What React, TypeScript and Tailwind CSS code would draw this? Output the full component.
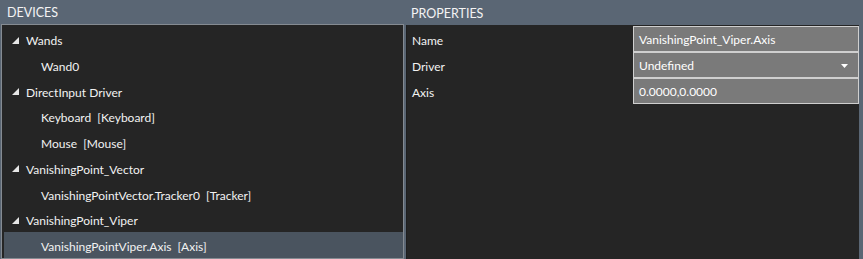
import React from "react";

type Row = { label: string; level: 0 | 1; selected?: boolean };

const rows: Row[] = [
  { label: "Wands", level: 0 },
  { label: "Wand0", level: 1 },
  { label: "DirectInput Driver", level: 0 },
  { label: "Keyboard\u00a0\u00a0[Keyboard]", level: 1 },
  { label: "Mouse\u00a0\u00a0[Mouse]", level: 1 },
  { label: "VanishingPoint_Vector", level: 0 },
  { label: "VanishingPointVector.Tracker0\u00a0\u00a0[Tracker]", level: 1 },
  { label: "VanishingPoint_Viper", level: 0 },
  { label: "VanishingPointViper.Axis\u00a0\u00a0[Axis]", level: 1, selected: true },
];

function Expander() {
  return (
    <svg width="7" height="7" viewBox="0 0 7 7" className="shrink-0">
      <polygon points="7,0 7,7 0,7" fill="#e6e6e6" />
    </svg>
  );
}

export default function App() {
  return (
    <div
      className="w-[863px] h-[259px] overflow-hidden bg-[#5a6674] flex text-[12px] text-[#f2f2f2]"
      style={{ fontFamily: "Lato, 'Open Sans', sans-serif" }}
    >
      {/* Devices column */}
      <div className="w-[405px] pl-[1px] pr-[1px] flex flex-col shrink-0">
        <div className="h-[25px] flex items-center pl-[6px] pt-[3px] text-[12.5px] text-[#f4f4f4]">DEVICES</div>
        <div className="flex-1 border border-[#858b92] bg-[#252525] pt-[1px] pl-[2px]">
          {rows.map((r, i) => (
            <div
              key={i}
              className={
                "h-[25.75px] flex items-center " +
                (r.selected ? "bg-[#4a545f]" : "")
              }
            >
              {r.level === 0 ? (
                <div className="flex items-center pl-[8px] gap-[7px]">
                  <span className="pt-[2px]">
                    <Expander />
                  </span>
                  <span className="pt-[4px]">{r.label}</span>
                </div>
              ) : (
                <span className="pl-[37px] pt-[4px] whitespace-pre">{r.label}</span>
              )}
            </div>
          ))}
        </div>
      </div>

      {/* Properties column */}
      <div className="flex-1 flex flex-col pl-[1px] pr-[4px]">
        <div className="h-[25px] flex items-center pl-[5px] pt-[3px] text-[12.5px] text-[#f4f4f4]">PROPERTIES</div>
        <div className="flex-1 bg-[#252525] border-l border-[#1e1e1e] pt-[1px]">
          <div className="grid grid-cols-[226px_1fr]">
            {[
              { k: "Name", v: "VanishingPoint_Viper.Axis" },
              { k: "Driver", v: "Undefined", dropdown: true },
              { k: "Axis", v: "0.0000,0.0000" },
            ].map((p) => (
              <React.Fragment key={p.k}>
                <div className="h-[26px] flex items-center pl-[5px] pt-[3px]">{p.k}</div>
                <div className="h-[26px] border border-[#cfcfcf] bg-[#7a7a7a] flex items-center pl-[5px] pr-[10px] pt-[2px] text-white">
                  <span className="flex-1">{p.v}</span>
                  {p.dropdown && (
                    <svg width="7" height="4" viewBox="0 0 7 4">
                      <polygon points="0,0 7,0 3.5,4" fill="#ffffff" />
                    </svg>
                  )}
                </div>
              </React.Fragment>
            ))}
          </div>
        </div>
      </div>
    </div>
  );
}
